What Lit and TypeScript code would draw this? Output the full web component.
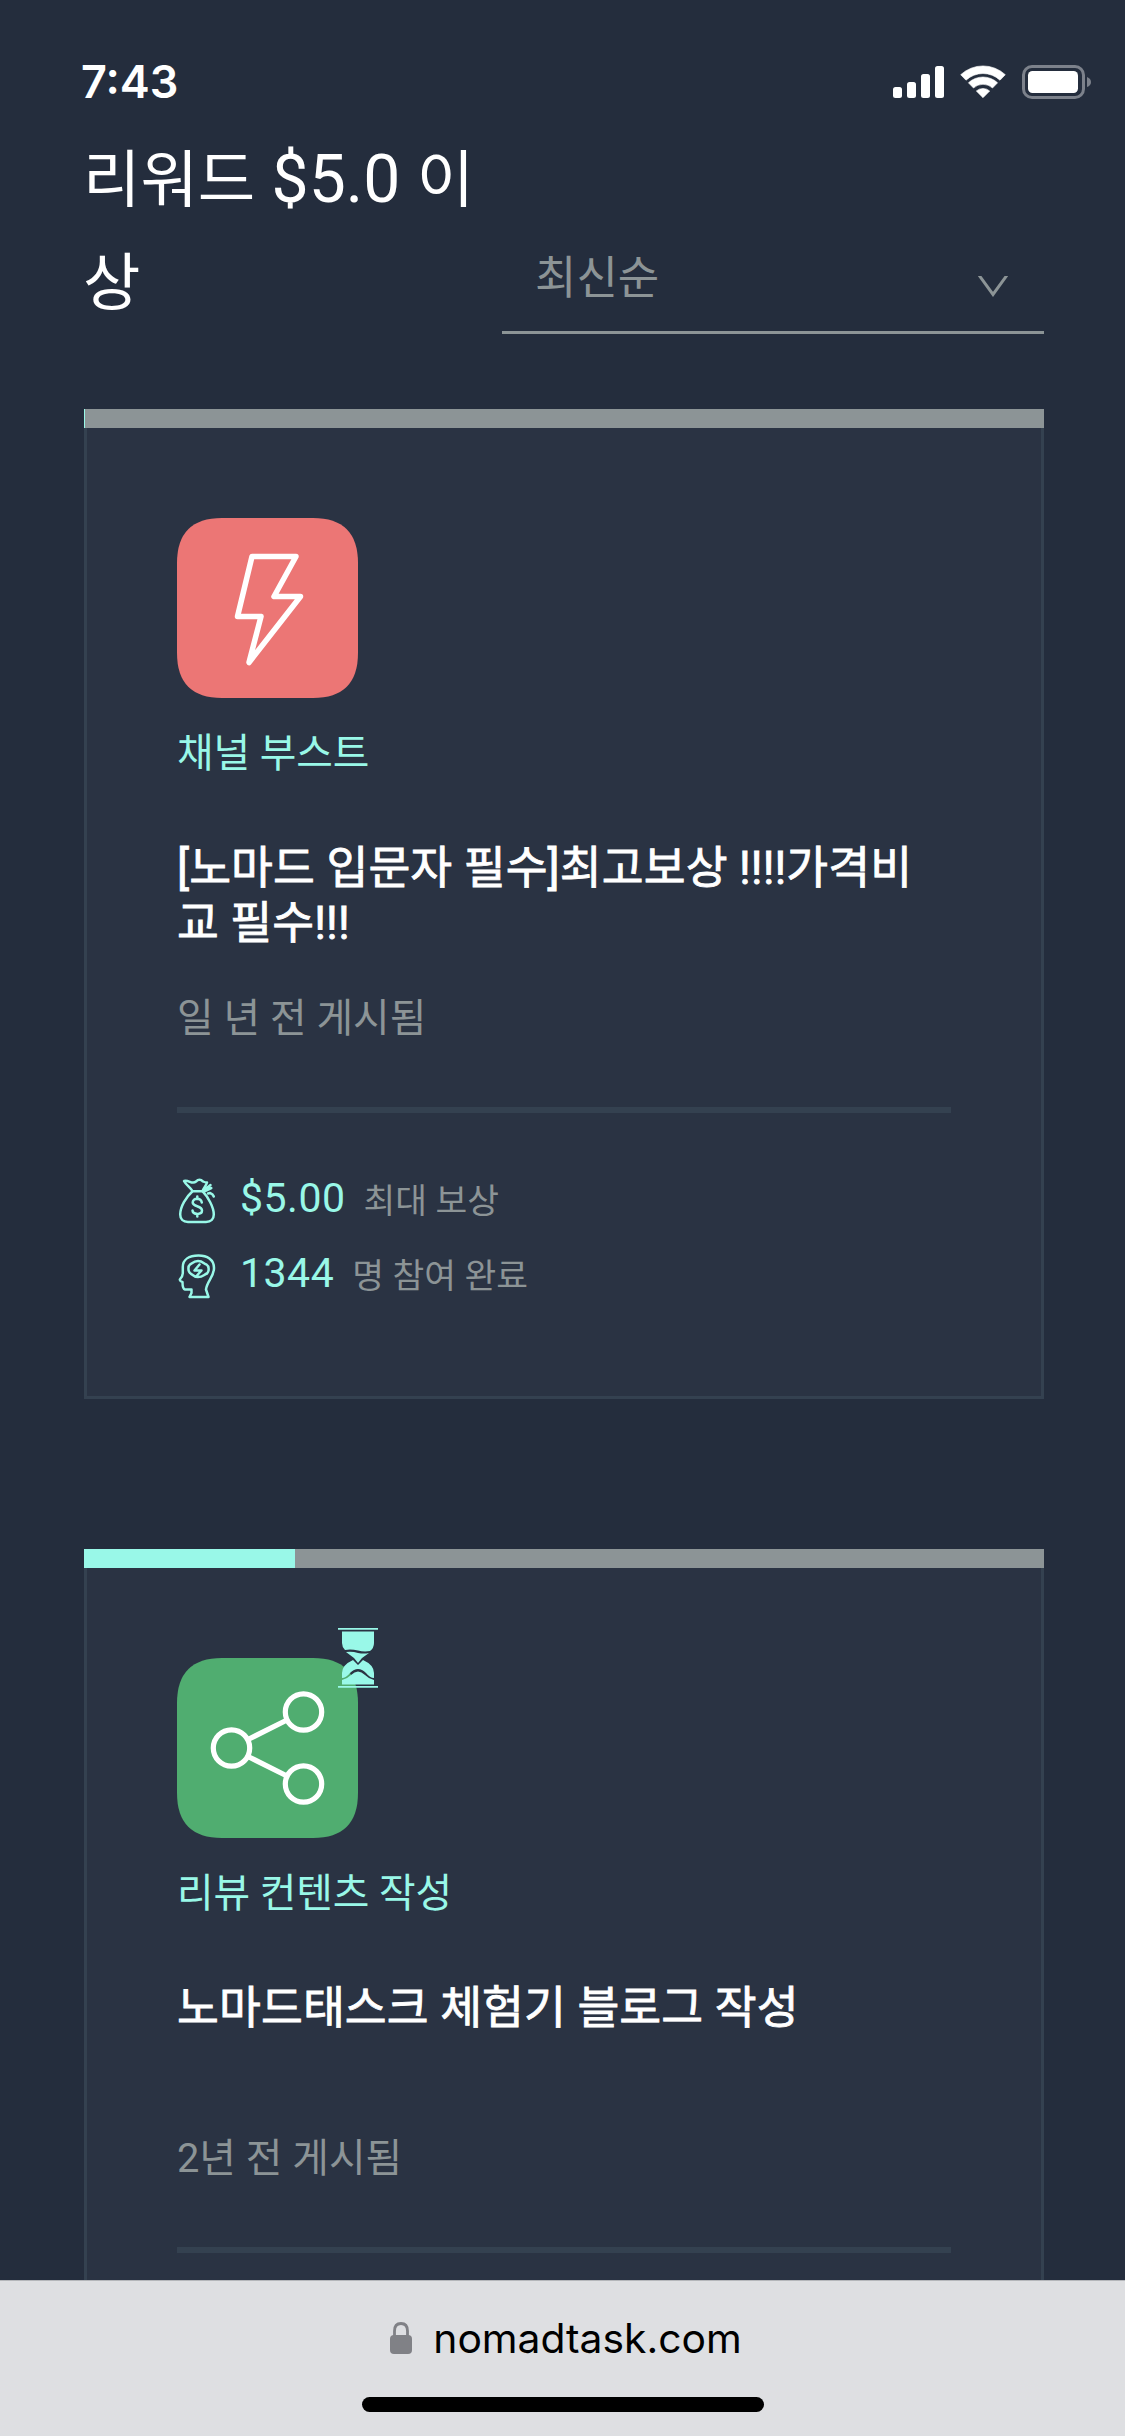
import { LitElement, html, css, svg } from "lit";
import { customElement, property } from "lit/decorators.js";

interface Stat { icon: "bag" | "head"; value: string; label: string }
interface Task {
  icon: "bolt" | "share"; category: string; title: string; posted: string;
  progress: number; pending: boolean; stats: Stat[];
}

const tasks: Task[] = [
  {
    icon: "bolt", category: "채널 부스트", title: "[노마드 입문자 필수]최고보상 !!!!가격비교 필수!!!",
    posted: "일 년 전 게시됨", progress: 0.15, pending: false,
    stats: [
      { icon: "bag", value: "$5.00", label: "최대 보상" },
      { icon: "head", value: "1344", label: "명 참여 완료" },
    ],
  },
  {
    icon: "share", category: "리뷰 컨텐츠 작성", title: "노마드태스크 체험기 블로그 작성",
    posted: "2년 전 게시됨", progress: 22, pending: true, stats: [],
  },
];

const bolt = svg`<path d="M75 38.500H119L97 78.500H123.500L72 144.500L84 98.500H60.500Z" fill="none" stroke="#fff" stroke-width="5.500" stroke-linejoin="round"/>`;
const share = svg`<g fill="none" stroke="#fff" stroke-width="5.200"><circle cx="54.500" cy="90" r="18.200"/><circle cx="126.500" cy="54" r="18.200"/><circle cx="126.500" cy="126" r="18.200"/><path d="M71 81.500L110 62M71 98.500L110 118"/></g>`;

@customElement("task-card")
export class TaskCard extends LitElement {
  @property({ attribute: false }) task!: Task;

  static styles = css`
    :host { display: block; }
    .card { box-sizing: border-box; width: 960px; height: 990px; background: #2a3343; border: 3px solid #344150; border-top: 0; }
    .progress { height: 19px; margin: 0 -3px; background: #8c9496; }
    .fill { height: 100%; background: #99f8e8; }
    .body { padding: 90px 90px 0; }
    .tile { position: relative; width: 181px; height: 180px; }
    .tile svg { display: block; overflow: visible; }
    .tile .glass { position: absolute; left: 161px; top: -30px; }
    .category { margin-top: 26px; height: 60px; font-size: 39.8px; line-height: 59px; letter-spacing: -.1px; color: #99f8e8; }
    .title { margin: 57px 0 0; width: 760px; height: 112px; font-size: 45.5px; line-height: 55px; letter-spacing: .1px; font-weight: 400; -webkit-text-stroke: .8px #fff; color: #fff; word-break: break-all; }
    .posted { margin-top: 36px; height: 60px; font-size: 39.8px; line-height: 60px; color: #8c9496; }
    .rule { height: 6px; margin: 58px 0 49px; background: #344150; }
    .stat { display: flex; align-items: center; height: 75px; white-space: nowrap; }
    .stat svg { flex: none; margin-left: 1px; }
    .value { margin-left: 22px; padding-bottom: 3px; font-size: 41px; letter-spacing: .5px; color: #99f8e8; }
    .label { margin-left: 18px; padding-bottom: 4px; font-size: 34.5px; color: #8c9496; }
  `;

  private statIcon(name: Stat["icon"]) {
    return name === "bag"
      ? html`<svg width="40" height="50" viewBox="0 0 40 50" fill="none" stroke="#99f8e8" stroke-width="2.500" stroke-linejoin="round" stroke-linecap="round">
          <path d="M14.500 16.200C8 22 2.200 32 2.200 39.500C2.200 44 5 47 10 47H28C33 47 35.800 44 35.800 39.500C35.800 32 30 22 24.500 16.200Z"/>
          <path d="M14.500 16.200C12 12 8 10 6 6C11 4.500 14 10 18 6.500C21 3.500 23 4.500 25 6.500Q27 7.500 29 7.500C28 11 26 12 24.500 16.200M26 16.500L33.300 13M27.500 14L32.500 10M30 18.500L32 18Q35 19 35.800 21.500"/>
          <path d="M23.800 27.500C23 22.500 14.700 22.500 14.700 27.500C14.700 32 24 30.500 24 35.500C24 40 15 40 14.500 35.500M19.300 21.500V24M19.300 39V41.500"/>
        </svg>`
      : html`<svg width="40" height="50" viewBox="0 0 40 50" fill="none" stroke="#99f8e8" stroke-width="2.500" stroke-linejoin="round" stroke-linecap="round">
          <path d="M11.500 47H30.500L28 39.500C29 31 36 27 36 18C36 9.500 29 5.500 20.500 5.500C11 5.500 4.800 9.500 4.800 17V23Q5 26 1.800 29.500Q2 31.500 4.500 32Q4.500 39 7 39.500L13.500 39.500V43Z"/>
          <path d="M20 11C15.500 11 13.500 14 12 14.500C10 16 9.800 21 12 23C14 24.500 16 27 20 27C25 27 26 24.500 29 23.500C31.500 21 31 16 28.500 14.500C26 14 25 11 20 11ZM21.500 14.500L16.500 20.500H23.500L19 25.500"/>
        </svg>`;
  }

  render() {
    const t = this.task;
    return html`<article class="card">
      <div class="progress"><div class="fill" style="width:${t.progress}%"></div></div>
      <div class="body">
        <div class="tile">
          <svg width="181" height="180" viewBox="0 0 181 180">
            <path fill=${t.icon === "bolt" ? "#ec7675" : "#50ad70"} d="M45 0H136Q181 0 181 45V135Q181 180 136 180H45Q0 180 0 135V45Q0 0 45 0Z"/>
            ${t.icon === "bolt" ? bolt : share}
          </svg>
          ${t.pending ? html`<svg class="glass" width="40" height="60" viewBox="0 0 40 60" fill="#99f8e8">
            <path d="M0 0H40V1.700H0ZM0 58H40V59.700H0ZM4 3.500H36V15Q36 20 32 23Q26 24 20 22.500Q13 21 7 22Q4 19 4 15ZM8 24Q14 23 20 25Q26 26 31 25L24 30L20 35L16 30ZM15 32L20 37L25 32Q36 37 36 45V50Q32 50 28 45Q20 37 12 45Q8 50 4 50V45Q4 37 15 32ZM4 52Q9 51 13 47Q20 40 27 47Q31 51 36 52V56.500H4Z"/>
          </svg>` : ""}
        </div>
        <div class="category">${t.category}</div>
        <h2 class="title">${t.title}</h2>
        <div class="posted">${t.posted}</div>
        <div class="rule"></div>
        ${t.stats.map(s => html`<div class="stat">${this.statIcon(s.icon)}<span class="value">${s.value}</span><span class="label">${s.label}</span></div>`)}
      </div>
    </article>`;
  }
}

@customElement("app-root")
export class AppRoot extends LitElement {
  static styles = css`
    :host { display: flex; flex-direction: column; width: 1125px; height: 2436px; overflow: hidden; background: #242d3d; font-family: Roboto, "Noto Sans CJK KR", sans-serif; }
    .status { flex: none; box-sizing: border-box; height: 132px; padding: 54px 34px 0 81px; display: flex; justify-content: space-between; align-items: flex-start; }
    .time { font: 600 45px/56px Inter, sans-serif; color: #fff; }
    .head { flex: none; height: 277px; padding: 0 81px 0 84px; display: flex; justify-content: space-between; }
    .heading { margin: -3px 0 0 -1px; width: 400px; font-size: 66px; line-height: 102px; font-weight: 400; color: #fff; white-space: nowrap; }
    .ko { font-size: 62.4px; }
    .select { box-sizing: border-box; width: 542px; height: 98px; margin-top: 104px; padding: 0 36px 0 33px; border-bottom: 3px solid #8c9496; display: flex; justify-content: space-between; color: #8c9496; font-size: 45px; line-height: 85px; }
    .select svg { margin-top: 40px; }
    .list { flex: 1; min-height: 0; overflow: hidden; display: flex; flex-direction: column; gap: 150px; padding-left: 84px; }
    .browser { flex: none; box-sizing: border-box; height: 156px; border-top: 1px solid #b4b6ba; background: #dedfe2; display: flex; flex-direction: column; align-items: center; }
    .address { display: flex; align-items: center; gap: 21px; box-sizing: border-box; height: 116px; padding: 0 0 2px 7px; font: 400 40.8px/60px Inter, sans-serif; color: #000; }
    .home { width: 402px; height: 15px; border-radius: 8px; background: #000; }
  `;

  render() {
    return html`
      <div class="status">
        <span class="time">7:43</span>
        <svg width="200" height="56" viewBox="0 0 200 56" fill="#fff">
          <rect x="2" y="33" width="9" height="11" rx="2.500"/><rect x="16" y="28" width="9" height="16" rx="2.500"/><rect x="30" y="20" width="9" height="24" rx="2.500"/><rect x="44" y="12" width="9" height="32" rx="2.500"/>
          <path stroke="#fff" stroke-width=".6" stroke-linejoin="round" d="M69.700 20.700A32.700 32.700 0 0 1 114.300 20.700L109 26.200A25 25 0 0 0 75 26.200ZM77.400 28.800A21.300 21.300 0 0 1 106.600 28.800L101.500 34A14 14 0 0 0 82.500 34ZM85.300 37A10 10 0 0 1 98.700 37L92 43.700Z"/>
          <rect x="132.500" y="12.500" width="60" height="31" rx="8.500" fill="none" stroke="#7c818b" stroke-width="3"/>
          <rect x="137" y="17" width="50" height="22" rx="4.500"/>
          <path d="M196 23Q200 24.500 200 28T196 33Z" fill="#7c818b"/>
        </svg>
      </div>
      <header class="head">
        <h1 class="heading"><span class="ko">리워드</span> $5.0 <span class="ko">이<br>상</span></h1>
        <div class="select"><span>최신순</span>
          <svg width="30" height="21" viewBox="0 0 30 21" fill="none" stroke="#8c9496" stroke-width="3"><path d="M.5 -1.500L15 18.500L29.500 -1.500"/></svg>
        </div>
      </header>
      <main class="list">${tasks.map(t => html`<task-card .task=${t}></task-card>`)}</main>
      <footer class="browser">
        <div class="address">
          <svg width="22" height="32" viewBox="0 0 22 32"><rect y="13" width="22" height="19" rx="4" fill="#808186"/><path d="M4.500 14V9Q4.500 1.500 11 1.500T17.500 9V14" fill="none" stroke="#808186" stroke-width="2.800"/></svg>
          <span>nomadtask.com</span>
        </div>
        <div class="home"></div>
      </footer>`;
  }
}
